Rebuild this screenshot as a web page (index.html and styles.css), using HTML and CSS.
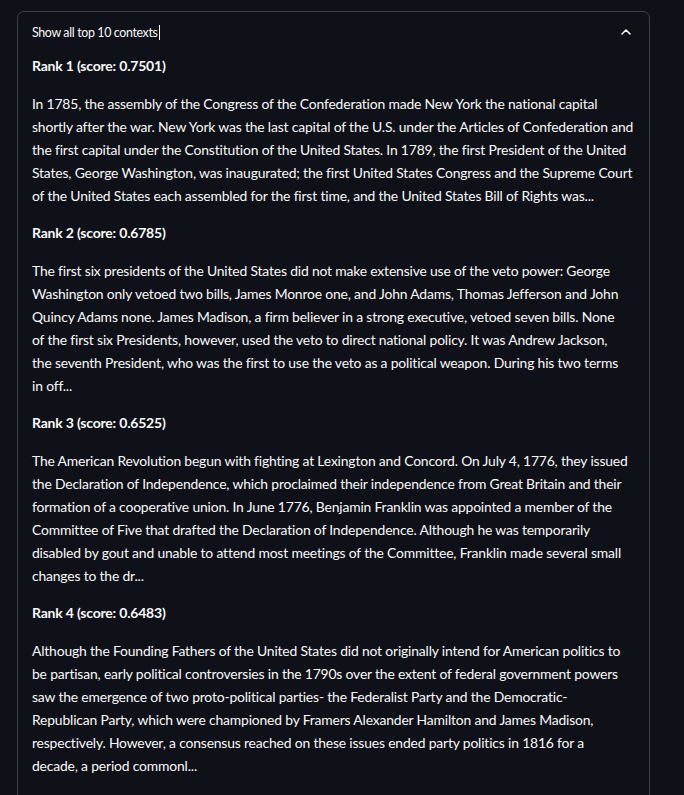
FILE: index.html
```html
<!DOCTYPE html>
<html lang="en">
<head>
<meta charset="utf-8">
<title>Contexts</title>
<link rel="stylesheet" href="styles.css">
</head>
<body>
<main class="page">
  <details class="expander" open>
    <summary class="expander-head">
      <span class="expander-title">Show all top 10 contexts<span class="cursor"></span></span>
      <svg class="chevron" width="10" height="6" viewBox="0 0 10 6" aria-hidden="true"><path d="M1 5 L5 1 L9 5" fill="none" stroke="#fafafa" stroke-width="1.6" stroke-linecap="round" stroke-linejoin="round"/></svg>
    </summary>
    <div class="expander-body">
      <h4 class="rank">Rank 1 (score: 0.7501)</h4>
      <p class="ctx">In 1785, the assembly of the Congress of the Confederation made New York the national capital<br>shortly after the war. New York was the last capital of the U.S. under the Articles of Confederation and<br>the first capital under the Constitution of the United States. In 1789, the first President of the United<br>States, George Washington, was inaugurated; the first United States Congress and the Supreme Court<br>of the United States each assembled for the first time, and the United States Bill of Rights was...</p>
      <h4 class="rank">Rank 2 (score: 0.6785)</h4>
      <p class="ctx">The first six presidents of the United States did not make extensive use of the veto power: George<br>Washington only vetoed two bills, James Monroe one, and John Adams, Thomas Jefferson and John<br>Quincy Adams none. James Madison, a firm believer in a strong executive, vetoed seven bills. None<br>of the first six Presidents, however, used the veto to direct national policy. It was Andrew Jackson,<br>the seventh President, who was the first to use the veto as a political weapon. During his two terms<br>in off...</p>
      <h4 class="rank">Rank 3 (score: 0.6525)</h4>
      <p class="ctx">The American Revolution begun with fighting at Lexington and Concord. On July 4, 1776, they issued<br>the Declaration of Independence, which proclaimed their independence from Great Britain and their<br>formation of a cooperative union. In June 1776, Benjamin Franklin was appointed a member of the<br>Committee of Five that drafted the Declaration of Independence. Although he was temporarily<br>disabled by gout and unable to attend most meetings of the Committee, Franklin made several small<br>changes to the dr...</p>
      <h4 class="rank">Rank 4 (score: 0.6483)</h4>
      <p class="ctx">Although the Founding Fathers of the United States did not originally intend for American politics to<br>be partisan, early political controversies in the 1790s over the extent of federal government powers<br>saw the emergence of two proto-political parties- the Federalist Party and the Democratic-<br>Republican Party, which were championed by Framers Alexander Hamilton and James Madison,<br>respectively. However, a consensus reached on these issues ended party politics in 1816 for a<br>decade, a period commonl...</p>
    </div>
  </details>
</main>
</body>
</html>
```

FILE: styles.css
```css
html, body {
  margin: 0;
  padding: 0;
  background: #0e1117;
  color: #fafafa;
  font-family: Lato, "Open Sans", sans-serif;
}

.page {
  padding: 11px 0 0 17px;
  width: 633px;
}

.expander {
  border: 1px solid rgba(250, 250, 250, 0.2);
  border-radius: 7px;
  min-height: 820px;
}

.expander-head {
  list-style: none;
  display: flex;
  align-items: center;
  justify-content: space-between;
  height: 40px;
  padding: 0 18px 0 14px;
  cursor: pointer;
}

.expander-head::-webkit-details-marker {
  display: none;
}

.expander-title {
  font-size: 12.4px;
  letter-spacing: -0.35px;
  display: flex;
  align-items: center;
}

.cursor {
  display: inline-block;
  width: 1px;
  height: 15px;
  background: #fafafa;
  margin-left: 1px;
}

.chevron {
  display: block;
}

.expander-body {
  padding: 2px 14px 0 14px;
}

.rank {
  margin: 0 0 14.5px 0;
  font-size: 14px;
  line-height: 23px;
  font-weight: 700;
  letter-spacing: -0.2px;
}

.ctx {
  margin: 0 0 14.5px 0;
  font-size: 13.9px;
  line-height: 23px;
  letter-spacing: -0.17px;
  white-space: nowrap;
}
```
